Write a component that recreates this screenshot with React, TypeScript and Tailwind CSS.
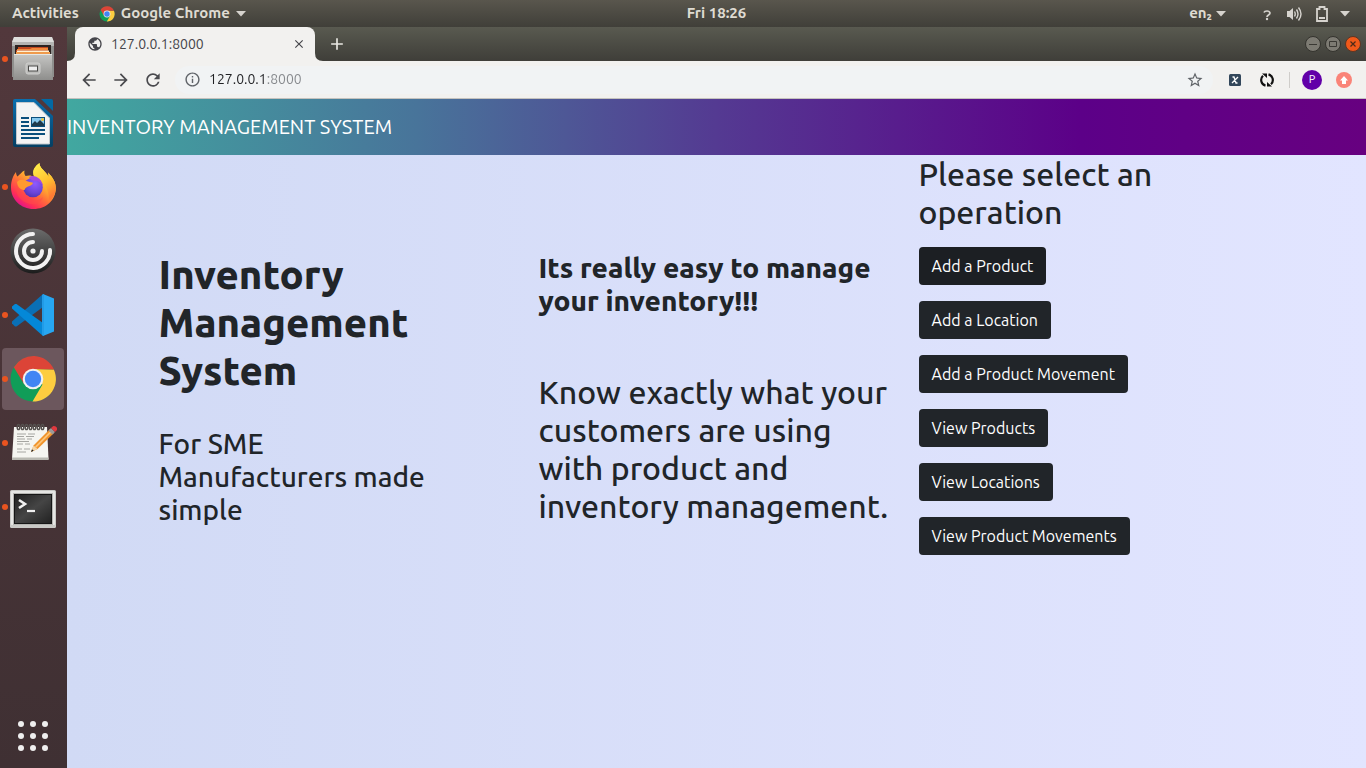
import type { ReactNode } from "react";
import {
  MdAdd,
  MdArrowBack,
  MdArrowForward,
  MdClose,
  MdInfoOutline,
  MdPublic,
  MdRefresh,
  MdStarBorder,
} from "react-icons/md";

function ChromeLogo({ className }: { className: string }) {
  return (
    <svg viewBox="0 0 48 48" className={className} aria-hidden="true">
      <circle cx="24" cy="24" r="22.5" fill="#109d58" />
      <path d="M24 24 33.5 29.5 23.5 46.5A22.5 22.5 0 0 0 44.8 14.5L24 14Z" fill="#fdcd40" />
      <path d="M4.8 12.3A22.5 22.5 0 0 1 44.9 14.5L24 14 15 29Z" fill="#dc4437" />
      <circle cx="24" cy="24" r="10.3" fill="#f1f1f1" />
      <circle cx="24" cy="24" r="8.2" fill="#4285f4" />
    </svg>
  );
}

function FilesIcon() {
  return (
    <svg viewBox="0 0 48 48" className="size-12" aria-hidden="true">
      <defs>
        <linearGradient id="cab" x1="0" y1="0" x2="0" y2="1">
          <stop offset="0" stopColor="#c6c6c4" />
          <stop offset="1" stopColor="#8e8e8c" />
        </linearGradient>
      </defs>
      <path d="M5 2h38l2 5v35h-1v3H4v-3H3V7Z" fill="#8f8f8d" />
      <path d="M5 2h38l2 5H3Z" fill="#dededc" />
      <path d="M3 7h42v4H3Z" fill="#b4b4b2" />
      <path d="M6 10h36v10H6Z" fill="#2c2321" />
      <path d="M9 12h30v8H7v-5h2Z" fill="#c2481e" />
      <path d="M8 14h13l2-1h16v2H8Z" fill="#f08a3c" />
      <path d="M8 15.500h32V17H8Z" fill="#fff0d0" />
      <path d="M7 17h34v2H7Z" fill="#ef9a4c" />
      <path d="M5 19h38v26H5Z" fill="url(#cab)" />
      <path d="M5 19h38v1H5Z" fill="#e6e6e4" />
      <rect x="17" y="28" width="14" height="11" rx="2" fill="#bcbcba" stroke="#d0d0ce" />
      <rect x="19.500" y="31" width="9" height="5" fill="#eee" stroke="#4a4a48" />
    </svg>
  );
}

function WriterIcon() {
  return (
    <svg viewBox="0 0 48 48" className="size-12" aria-hidden="true">
      <defs>
        <linearGradient id="wr" x1="0" y1="0" x2="0" y2="1">
          <stop offset="0" stopColor="#0b6fae" />
          <stop offset="1" stopColor="#043f63" />
        </linearGradient>
      </defs>
      <path d="M6 0h20l18 17v29a2 2 0 0 1-2 2H6a2 2 0 0 1-2-2V2a2 2 0 0 1 2-2Z" fill="url(#wr)" />
      <path d="M32 0h10a2 2 0 0 1 2 2v10Z" fill="#0369a3" />
      <path d="M7.500 3.500H25L40.500 19v26h-33Z" fill="#f4f4f4" stroke="#c4c8cc" />
      <path d="M12 19h8M12 23h8M12 27h8M12 31h24M12 35h24M12 39h18" stroke="#0b4f7c" strokeWidth="2" />
      <path d="M22 18h14v10H22Z" fill="#0b4f7c" />
      <path d="M23 19h12v8H23Z" fill="#86c8ee" />
      <path d="m23 27 0-2 3-3 2 2 3-3 4 4v2Z" fill="#1e3a4c" />
      <circle cx="33.500" cy="20.500" r="1.500" fill="#f1c232" />
    </svg>
  );
}

function FirefoxIcon() {
  return (
    <svg viewBox="0 0 48 48" className="size-12" aria-hidden="true">
      <defs>
        <linearGradient id="ff" x1="0.85" y1="0.1" x2="0.25" y2="0.95">
          <stop offset="0" stopColor="#fff04a" />
          <stop offset="0.35" stopColor="#ffbd2c" />
          <stop offset="0.6" stopColor="#ff7139" />
          <stop offset="0.85" stopColor="#ff3055" />
          <stop offset="1" stopColor="#e31587" />
        </linearGradient>
        <radialGradient id="ffp" cx="0.6" cy="0.3" r="0.8">
          <stop offset="0" stopColor="#9059ff" />
          <stop offset="0.6" stopColor="#6b45d8" />
          <stop offset="1" stopColor="#4a2fa8" />
        </radialGradient>
        <linearGradient id="fft" x1="0" y1="0" x2="0.4" y2="1">
          <stop offset="0" stopColor="#fff44f" />
          <stop offset="0.6" stopColor="#ffc12f" />
          <stop offset="1" stopColor="#ff7a35" />
        </linearGradient>
      </defs>
      <path
        d="M7 9c0 2 .8 3.500 1.500 4.500C11 11.500 13 8.500 15.500 7.500c-.5 2.500 0 4 1 5.500C20 12 23 12.500 25 14c-2-6 1-11 5.500-14 0 4 3 6 6 9.500 1.500 1.500 2.500 3 3 4.500 0-2 0-3-.5-4.500 5 5 8 10 7.800 16C46.500 37.500 37 46 24.500 46S2 36.500 2 24.500C2 18 4 12.500 7 9Z"
        fill="url(#ff)"
      />
      <path
        d="M30.500 0c0 4 3 6 6 9.500 1.500 1.500 2.500 3 3 4.500 0-2 0-3-.5-4.500 5 5 8 10 7.800 16-.3 6-3.300 11-7.300 14 1-7-.5-13-4.500-18-3-4-9-5-10.500-10S26.500 3 30.500 0Z"
        fill="url(#fft)"
      />
      <path d="M8 20c-1 8 5 10 8 11 3 7 12 9 18 3-2 7-10 9-16 6-8-3-13-10-10-20Z" fill="#ff4a4a" opacity=".5" />
      <circle cx="24" cy="24.500" r="9.800" fill="url(#ffp)" />
      <path d="M20 14c6-3 13 2 14 9-2-4-6-6-9-5-2-1-4-2-5-4Z" fill="#a44be0" />
      <path
        d="M8 19c3-4 8-2 11-.5 2 .8 4 .500 5 1.500-.500 2-3 3-5 3.500-2 1-3 2-3.500 3.500-3 0-7-2-7.500-8Z"
        fill="#ff9a2e"
      />
    </svg>
  );
}

function SwirlIcon() {
  return (
    <svg viewBox="0 0 48 48" className="size-12" aria-hidden="true">
      <defs>
        <linearGradient id="sw" x1="0" y1="0" x2="0" y2="1">
          <stop offset="0" stopColor="#6c6c6c" />
          <stop offset="1" stopColor="#1c1c1c" />
        </linearGradient>
      </defs>
      <circle cx="24" cy="24" r="22.500" fill="url(#sw)" />
      <g fill="none" stroke="#f2f2f2" strokeWidth="4" strokeLinecap="round">
        <path d="M24 7A17 17 0 1 0 41 23" />
        <path d="M24 15A9 9 0 1 0 33 24" />
      </g>
      <circle cx="24" cy="24" r="2.600" fill="#f2f2f2" />
    </svg>
  );
}

function CodeIcon() {
  return (
    <svg viewBox="0 0 48 48" className="size-12" aria-hidden="true">
      <path d="M34 3v13L7.500 35.500 6 35.500 3 32.500v-2Z" fill="#0a6fb5" />
      <path d="M3 17.500v-2L6 13h1.500L34 32v13Z" fill="#0488d8" />
      <path d="M34 3 45 7.500v33L34 45Z" fill="#27a7f2" />
      <path d="M33 4c1-1 2-1 2 .500v39c0 1.500-1 1.500-2 .500Z" fill="#229be6" />
    </svg>
  );
}

function EditorIcon() {
  return (
    <svg viewBox="0 0 48 48" className="size-12" aria-hidden="true">
      <path d="M5 8h33l1.500 32H3Z" fill="#f5f5f1" />
      <path d="M3 38.500h36.500l.2 2.500H3Z" fill="#b9b9b2" />
      <path
        d="M8 15h9M19 15h7M8 17.500h7M17 17.500h8M8 20h8M18 20h5M8 22.500h12M8 25h6M16 25h5M8 30h5M15 30h6M8 33h9"
        stroke="#a6a6a2"
      />
      <g fill="none" stroke="#55504e" strokeWidth="1.500">
        {[9.5, 13.5, 17.5, 21.5, 25.5, 29.5, 33.5].map((cx) => (
          <ellipse key={cx} cx={cx} cy="8" rx="1.300" ry="2.600" />
        ))}
      </g>
      <path d="m22 33 2.500-6.500L41 10l4 4-16.500 16Z" fill="#f0932b" />
      <path d="m26 27.500 16-16 1.200 1.200-16 16Z" fill="#fcc57a" />
      <path d="m22 33 2.500-6.500 4 3.500Z" fill="#f3d6ab" />
      <path d="m22 33 1-2.700 1.700 1.500Z" fill="#222" />
      <path d="m39.500 11.500 2.500-2.500 4 4-2.500 2.500Z" fill="#9a9a9a" />
      <path d="m42 9 2-1.800c2-1 5 1.500 4 3.800l-2 2Z" fill="#e0383e" />
    </svg>
  );
}

function TerminalIcon() {
  return (
    <svg viewBox="0 0 48 48" className="size-12" aria-hidden="true">
      <defs>
        <linearGradient id="tm" x1="0" y1="0" x2="1" y2="1">
          <stop offset="0" stopColor="#222" />
          <stop offset="0.500" stopColor="#454545" />
          <stop offset="1" stopColor="#222" />
        </linearGradient>
      </defs>
      <rect x="1" y="7" width="46" height="38" rx="1.500" fill="#c9c9c6" />
      <rect x="2" y="8" width="44" height="34" rx="1" fill="#e6e6e4" />
      <rect x="4" y="10" width="40" height="32" fill="#b5b5b2" />
      <rect x="5" y="11" width="38" height="30" fill="#161616" />
      <rect x="6" y="12" width="36" height="28" fill="url(#tm)" />
      <path d="m10 17 6 4-6 4" fill="none" stroke="#f0f0f0" strokeWidth="2.600" />
      <path d="M18 28h8" stroke="#f0f0f0" strokeWidth="2.200" />
    </svg>
  );
}

const dockItems: { name: string; icon: ReactNode; running: boolean; active?: boolean }[] = [
  { name: "Files", icon: <FilesIcon />, running: true },
  { name: "LibreOffice Writer", icon: <WriterIcon />, running: false },
  { name: "Firefox", icon: <FirefoxIcon />, running: true },
  { name: "Recorder", icon: <SwirlIcon />, running: false },
  { name: "Visual Studio Code", icon: <CodeIcon />, running: true },
  { name: "Google Chrome", icon: <ChromeLogo className="size-12" />, running: true, active: true },
  { name: "Text Editor", icon: <EditorIcon />, running: true },
  { name: "Terminal", icon: <TerminalIcon />, running: true },
];

function Caret() {
  return (
    <svg viewBox="0 0 10 6" className="h-[6px] w-[10px]" aria-hidden="true">
      <path d="M0 0h10L5 5.500Z" fill="#d6d3ce" />
    </svg>
  );
}

function TopBar() {
  return (
    <header className="grid h-[27px] shrink-0 grid-cols-[67px_1fr_auto_1fr] items-center bg-linear-to-b from-[#59564d] to-[#403f39] text-[15px] font-semibold text-[#dfdbd2]">
      <div className="col-span-2 flex items-center gap-5 pl-3">
        <button type="button">Activities</button>
        <button type="button" className="flex items-center gap-[6px]">
          <ChromeLogo className="size-4" />
          <span>Google Chrome</span>
          <Caret />
        </button>
      </div>
      <button type="button">Fri 18:26</button>
      <div className="flex items-center justify-end pr-4">
        <button type="button" className="flex items-center gap-1">
          <span>en₂</span>
          <Caret />
        </button>
        <button type="button" className="flex items-center pl-9" aria-label="System menu">
          <svg viewBox="0 0 10 14" className="h-[14px] w-[10px]" aria-hidden="true">
            <path d="M2 5.500Q2.500 4 5 4t3 2c0 2-3 2-3 4" fill="none" stroke="#d6d3ce" strokeWidth="1.700" />
            <circle cx="5" cy="12" r="1.200" fill="#d6d3ce" />
          </svg>
          <svg viewBox="0 0 16 16" className="ml-[14px] size-4" aria-hidden="true">
            <path d="M1 5h2.500L7 2v12l-3.500-3H1Z" fill="#d6d3ce" />
            <g fill="none" stroke="#d6d3ce" strokeWidth="1.400">
              <path d="M8.500 5.500q1.500 2.500 0 5M10.500 3.500q3 4.500 0 9M12.500 1.500q5 6.500 0 13" />
            </g>
          </svg>
          <svg viewBox="0 0 12 16" className="ml-[14px] h-4 w-3" aria-hidden="true">
            <path d="M1 3h2.500V1h5v2H11v12H1Z" fill="none" stroke="#d6d3ce" strokeWidth="1.800" />
            <path d="M3 12h6" stroke="#d6d3ce" strokeWidth="2" />
          </svg>
          <span className="ml-3">
            <Caret />
          </span>
        </button>
      </div>
    </header>
  );
}

function Dock() {
  return (
    <nav
      aria-label="Dock"
      className="flex w-[67px] shrink-0 flex-col justify-between bg-linear-to-b from-[#52383c] to-[#3f3033]"
    >
      <ul>
        {dockItems.map((item) => (
          <li key={item.name} className="flex h-16 items-center pr-[3px] pl-[2px]">
            <button
              type="button"
              aria-label={item.name}
              className={
                item.active
                  ? "relative flex h-[62px] w-full items-center justify-center rounded bg-[#6c575d]"
                  : "relative flex h-[62px] w-full items-center justify-center"
              }
            >
              {item.running && <span className="absolute left-0 size-[6px] rounded-full bg-[#e95420]" />}
              {item.icon}
            </button>
          </li>
        ))}
      </ul>
      <button
        type="button"
        aria-label="Show applications"
        className="flex h-16 items-center justify-center pr-[3px] pl-[2px]"
      >
        <svg viewBox="0 0 30 30" className="size-[30px]" fill="#efefef" aria-hidden="true">
          {[3, 15, 27].map((y) => [3, 15, 27].map((x) => <circle key={`${x}-${y}`} cx={x} cy={y} r="3" />))}
        </svg>
      </button>
    </nav>
  );
}

function TabStrip() {
  return (
    <div className="flex h-[34px] items-stretch justify-between bg-linear-to-b from-[#595a50] to-[#3f3e39]">
      <div className="flex">
        <div className="relative ml-2 flex w-60 items-center rounded-t-lg bg-[#f2f1ef] pr-[9px] pl-3 text-[#45454a]">
          <svg viewBox="0 0 8 8" className="absolute bottom-0 -left-2 size-2" aria-hidden="true">
            <path d="M8 0v8H0q8 0 8-8Z" fill="#f2f1ef" />
          </svg>
          <svg viewBox="0 0 8 8" className="absolute -right-2 bottom-0 size-2" aria-hidden="true">
            <path d="M0 0v8h8Q0 8 0 0Z" fill="#f2f1ef" />
          </svg>
          <MdPublic className="size-4" />
          <span className="grow pl-2 text-[14px] font-[450]">127.0.0.1:8000</span>
          <button type="button" aria-label="Close tab">
            <MdClose className="size-[14px]" />
          </button>
        </div>
        <button type="button" aria-label="New tab" className="ml-3 text-[#e9e7e2]">
          <MdAdd className="size-5" />
        </button>
      </div>
      <div className="flex items-center gap-1 pr-[5px]">
        <button type="button" aria-label="Minimize">
          <svg viewBox="0 0 16 16" className="size-4">
            <circle cx="8" cy="8" r="7.500" fill="#7d7b73" stroke="#34332e" />
            <path d="M4 8.500h8" stroke="#3a3934" />
          </svg>
        </button>
        <button type="button" aria-label="Maximize">
          <svg viewBox="0 0 16 16" className="size-4">
            <circle cx="8" cy="8" r="7.500" fill="#7d7b73" stroke="#34332e" />
            <path d="M4.500 5.500h7v5h-7Z" fill="none" stroke="#3a3934" />
          </svg>
        </button>
        <button type="button" aria-label="Close window">
          <svg viewBox="0 0 16 16" className="size-4">
            <circle cx="8" cy="8" r="7.500" fill="#f0591a" stroke="#5c3524" />
            <path d="m5.500 5.500 5 5m0-5-5 5" stroke="#4d2a18" strokeWidth="1.200" />
          </svg>
        </button>
      </div>
    </div>
  );
}

function Toolbar() {
  return (
    <div className="flex h-[38px] items-center border-b border-[#c4c2be] bg-[#f2f1ef] pr-[14px] pl-3 text-[#4a4a4e]">
      <div className="flex gap-3">
        <button type="button" aria-label="Back">
          <MdArrowBack className="size-5" />
        </button>
        <button type="button" aria-label="Forward">
          <MdArrowForward className="size-5" />
        </button>
        <button type="button" aria-label="Reload">
          <MdRefresh className="size-5" />
        </button>
      </div>
      <div className="ml-3 flex h-7 grow items-center rounded-full bg-[#f1f3f4] pr-[9px] pl-[9px]">
        <MdInfoOutline className="size-[17px] text-[#5f6368]" />
        <input
          type="text"
          aria-label="Address"
          defaultValue="127.0.0.1:8000"
          className="ml-2 min-w-0 grow bg-[linear-gradient(to_right,#202124_57px,#85888c_57px)] bg-clip-text text-[14px] text-transparent outline-none"
        />
        <button type="button" aria-label="Bookmark">
          <MdStarBorder className="size-[18px] text-[#5f6368]" />
        </button>
      </div>
      <div className="ml-4 flex items-center">
        <button type="button" aria-label="Extension">
          <svg viewBox="0 0 12 12" className="size-3">
            <rect width="12" height="12" rx="1.500" fill="#33475b" />
            <path d="M3.500 3h1.500l2 6h1.500M9 3 3 9" fill="none" stroke="#fff" strokeWidth="1.300" />
          </svg>
        </button>
        <button type="button" aria-label="Sync" className="ml-[18px]">
          <svg viewBox="0 0 16 16" className="size-4">
            <g fill="none" stroke="#111" strokeWidth="2.200">
              <path d="M6.500 13.600A5.800 5.800 0 0 1 4 3.800M9.500 2.400a5.800 5.800 0 0 1 2.500 9.800" />
            </g>
            <path d="M3 1.500h5V6ZM13 14.500H8V10Z" fill="#111" />
          </svg>
        </button>
        <span className="ml-[14px] h-4 w-px bg-[#cfcdca]" />
        <button
          type="button"
          aria-label="Profile"
          className="ml-3 flex size-5 items-center justify-center rounded-full bg-[#6200a8] text-[11px] text-white"
        >
          P
        </button>
        <button type="button" aria-label="Update" className="ml-[14px]">
          <svg viewBox="0 0 16 16" className="size-4">
            <circle cx="8" cy="8" r="8" fill="#fa8478" />
            <path d="m8 4 4 4.500h-2V12H6V8.500H4Z" fill="#fff" />
          </svg>
        </button>
      </div>
    </div>
  );
}

const operations = [
  "Add a Product",
  "Add a Location",
  "Add a Product Movement",
  "View Products",
  "View Locations",
  "View Product Movements",
];

function InventoryPage() {
  return (
    <div className="flex grow flex-col bg-linear-to-r from-[#d1daf5] to-[#e2e5ff] text-[#212529]">
      <nav className="flex h-14 items-center bg-[linear-gradient(to_right,#41a8a0,#48749a_27%,#543a92_50%,#5c0088_78%,#670080)]">
        <a href="#" className="text-[20px] font-[450] text-white">
          INVENTORY MANAGEMENT SYSTEM
        </a>
      </nav>
      <main className="mx-auto grid w-full max-w-[1140px] grid-cols-3 px-3">
        <div className="max-w-[285px] pt-24">
          <h1 className="text-[40px] leading-[48px] font-extrabold">Inventory Management System</h1>
          <h3 className="pt-8 text-[28px] leading-[33px] font-[550]">For SME Manufacturers made simple</h3>
        </div>
        <div className="pt-24 pl-2">
          <h3 className="text-[28px] leading-[33px] font-extrabold">Its really easy to manage your inventory!!!</h3>
          <h2 className="max-w-[360px] pt-14 text-[32px] leading-[38px] font-[550]">
            Know exactly what your customers are using with product and inventory management.
          </h2>
        </div>
        <div className="pl-4">
          <h2 className="max-w-[261px] text-[32px] leading-[38px] font-[550]">Please select an operation</h2>
          <ul className="flex flex-col items-start gap-4 pt-4">
            {operations.map((label) => (
              <li key={label} className="group">
                <button
                  type="button"
                  className="h-[38px] rounded bg-[#212529] px-[13px] text-[16px] font-[450] text-white group-first:bg-[#1c1f23]"
                >
                  {label}
                </button>
              </li>
            ))}
          </ul>
        </div>
      </main>
    </div>
  );
}

export default function App() {
  return (
    <div className="flex min-h-screen flex-col font-['Ubuntu','Noto_Sans',sans-serif]">
      <TopBar />
      <div className="flex grow">
        <Dock />
        <div className="flex min-w-0 grow flex-col">
          <TabStrip />
          <Toolbar />
          <InventoryPage />
        </div>
      </div>
    </div>
  );
}
